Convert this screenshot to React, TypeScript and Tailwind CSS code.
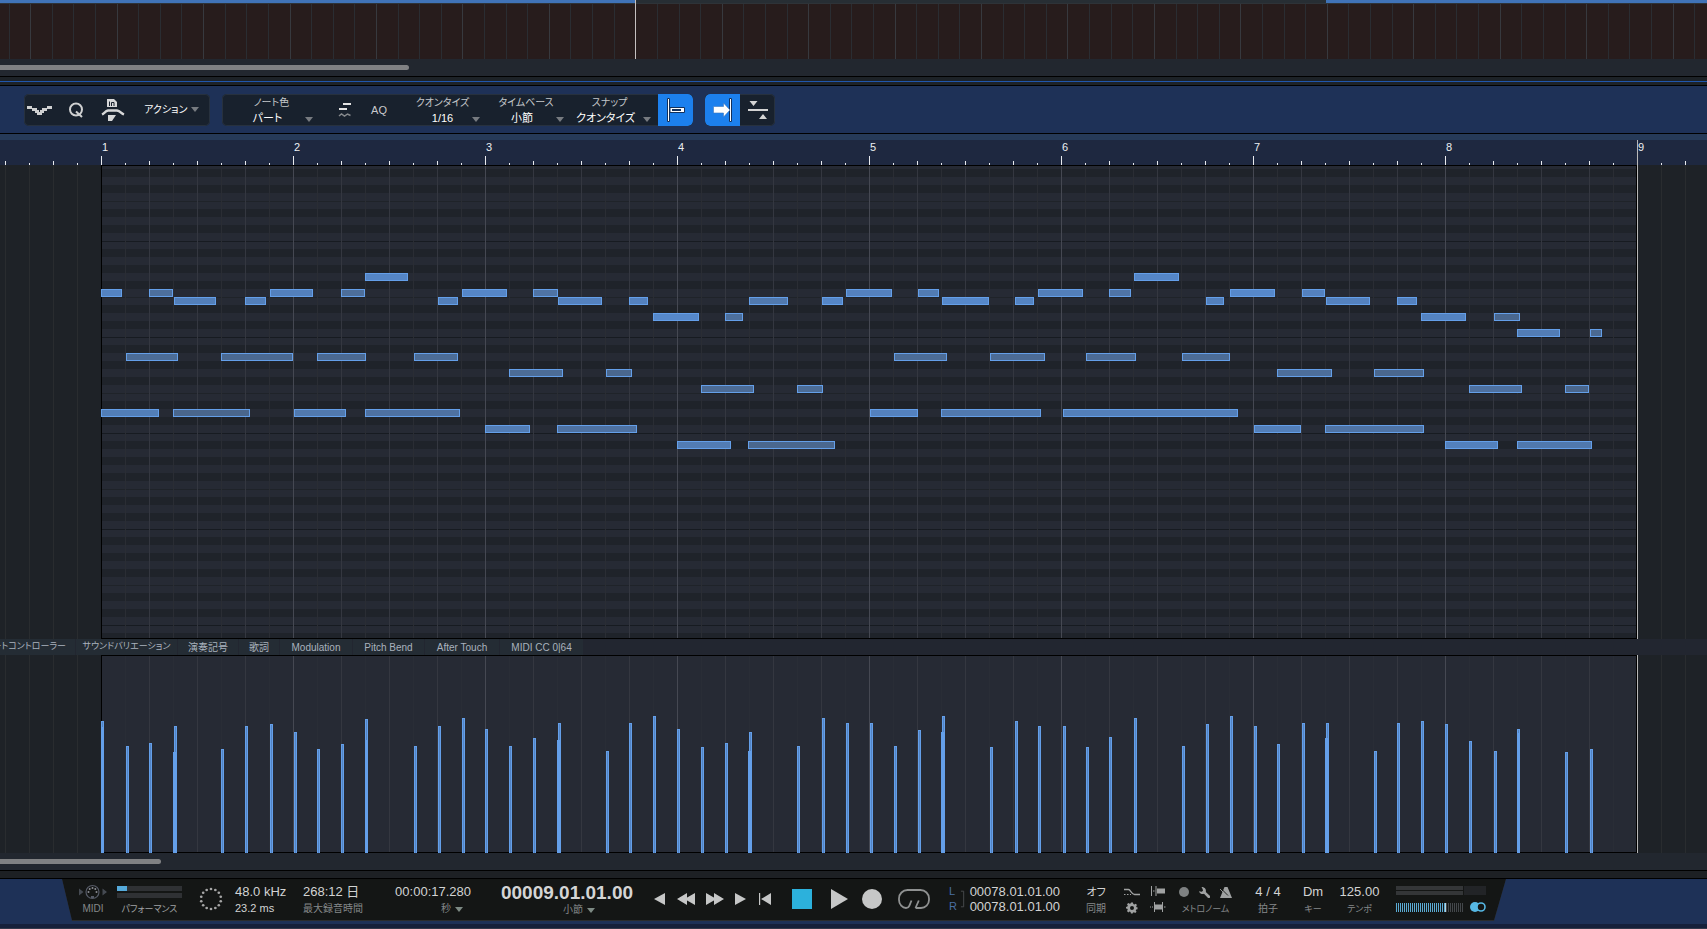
import React from "react";

const BAR = 192;
const STEP = 24;
const LEAD = 101;

const LATIN_JP = "font-['Liberation_Sans','Noto_Sans_CJK_JP',sans-serif]";

/* [start, length, row offset in semitones] */
const NOTES: [number, number, number][] = [
  [264, 43, 13], [1033, 45, 13],
  [0, 21, 15], [48, 24, 15], [169, 43, 15], [240, 24, 15], [361, 45, 15], [432, 25, 15],
  [745, 46, 15], [817, 21, 15], [937, 45, 15], [1008, 22, 15], [1129, 45, 15], [1201, 23, 15],
  [73, 42, 16], [144, 21, 16], [337, 20, 16], [457, 44, 16], [528, 19, 16], [648, 39, 16],
  [721, 21, 16], [841, 47, 16], [914, 19, 16], [1105, 18, 16], [1225, 44, 16], [1296, 20, 16],
  [552, 46, 18], [624, 18, 18], [1320, 45, 18], [1393, 26, 18],
  [1416, 43, 20], [1489, 12, 20],
  [25, 52, 23], [120, 72, 23], [216, 49, 23], [313, 44, 23],
  [793, 53, 23], [889, 55, 23], [985, 50, 23], [1081, 48, 23],
  [408, 54, 25], [505, 26, 25], [1176, 55, 25], [1273, 50, 25],
  [600, 53, 27], [696, 26, 27], [1368, 53, 27], [1464, 24, 27],
  [0, 58, 30], [72, 77, 30], [193, 52, 30], [264, 95, 30], [769, 48, 30], [840, 100, 30], [962, 175, 30],
  [384, 45, 32], [456, 80, 32], [1153, 47, 32], [1224, 99, 32],
  [576, 54, 34], [647, 87, 34], [1344, 53, 34], [1416, 75, 34],
];

/* [start, height in pixels] */
const VELOCITIES: [number, number][] = [
  [0, 132], [0, 126], [25, 107], [48, 110], [73, 127], [72, 101], [120, 104], [144, 127], [169, 129],
  [193, 121], [216, 104], [240, 109], [264, 134], [264, 113], [313, 107], [337, 127], [361, 135], [384, 124],
  [408, 107], [432, 115], [457, 130], [456, 113], [505, 102], [528, 130], [552, 137], [576, 124],
  [600, 106], [624, 110], [648, 121], [647, 102], [696, 107], [721, 135], [745, 130], [769, 130],
  [793, 107], [817, 123], [841, 137], [840, 121], [889, 106], [914, 132], [937, 127], [962, 127],
  [985, 106], [1008, 116], [1033, 135], [1081, 107], [1105, 129], [1129, 137], [1153, 127],
  [1176, 109], [1201, 130], [1225, 130], [1224, 115], [1273, 102], [1296, 130], [1320, 132],
  [1344, 129], [1368, 112], [1393, 102], [1416, 124], [1416, 120], [1464, 101], [1489, 104],
];

const velocityAt = (start: number, row: number) => {
  const hits = VELOCITIES.filter(([x]) => x === start).map(([, h]) => h);
  if (!hits.length) return 115;
  return row < 22 ? Math.max(...hits) : Math.min(...hits);
};

const isStacked = (x: number, h: number) =>
  VELOCITIES.some(([ox, oh]) => Math.abs(ox - x) <= 1 && oh > h);

const noteColor = (v: number) => {
  const t = Math.min(1, Math.max(0, (v - 101) / 36));
  const mix = (a: number, b: number) => Math.round(a + (b - a) * t);
  return `rgb(${mix(74, 86)},${mix(102, 136)},${mix(140, 202)})`;
};

const BLACK_KEYS = [1, 3, 5, 8, 10];
const ROWS = Array.from({ length: 72 }, (_, i) => i);
const LINES = Array.from({ length: 63 }, (_, i) => (i + 1) * STEP);

const lineTone = (x: number) =>
  x % BAR === 0 ? "bg-[#454852]" : x % 48 === 0 ? "bg-[#343740]" : "bg-[#2a2d34]";
const laneTone = (x: number) =>
  x % BAR === 0 ? "bg-[#454852]" : x % 48 === 0 ? "bg-[#343740]" : "bg-[#292d36]";

function SideGrid({ from, count, className }: { from: number; count: number; className: string }) {
  return (
    <div className={`relative overflow-hidden bg-[#1e2227] ${className}`}>
      {Array.from({ length: count }, (_, i) => (
        <span key={i} className="absolute inset-y-0 w-px bg-[#292c2f]" style={{ left: from + i * STEP }} />
      ))}
    </div>
  );
}

function Playhead() {
  return <div className="w-px shrink-0 bg-[#b8b8b8]" />;
}

function Caret({ className = "" }: { className?: string }) {
  return (
    <svg viewBox="0 0 8 5" className={`pointer-events-none h-[5px] w-2 shrink-0 ${className}`} aria-hidden="true">
      <path d="M0 0h8L4 5z" fill="currentColor" />
    </svg>
  );
}

function Field({ id, label, value, className, labelPad, valuePad }: { id: string; label: string; value: string; className: string; labelPad: string; valuePad: string }) {
  return (
    <div className={`relative flex flex-col pt-0.5 ${className}`}>
      <label htmlFor={id} className={`h-4 text-center text-[10px] leading-4 text-[#c4c7ca] ${labelPad}`}>{label}</label>
      <select
        id={id}
        defaultValue={value}
        className={`h-[15px] w-full appearance-none bg-transparent text-center text-[11px] leading-[15px] text-white outline-none [text-align-last:center] ${valuePad}`}
      >
        <option>{value}</option>
      </select>
      <Caret className="absolute right-0 bottom-1 text-[#777b80]" />
    </div>
  );
}

function Overview() {
  return (
    <div className="relative h-[59px] shrink-0 overflow-hidden bg-[#271c1c]">
      {Array.from({ length: 120 }, (_, i) => (
        <span
          key={i}
          className={`absolute inset-y-0 w-px ${i % 4 === 1 ? "bg-[#37393e]" : "bg-[#2a2d32]"}`}
          style={{ left: Math.round(8.6 + i * 21.61) }}
        />
      ))}
      <div className="absolute inset-x-0 top-0 flex h-1 border-b border-[#2e3338] bg-[#272e34]">
        <div className="h-[3px] w-[635px] bg-[#4073b8]" />
        <div className="w-[691px]" />
        <div className="h-[3px] flex-1 bg-[#4073b8]" />
      </div>
      <span className="absolute inset-y-0 left-[635px] w-px bg-[#c4c0c0]" />
    </div>
  );
}

function Toolbar() {
  const panel = "flex h-8 items-center overflow-hidden rounded-[5px] bg-[#18212d] ring-1 ring-inset ring-[#27313e]";
  return (
    <div className="flex h-12 shrink-0 items-center border-b border-black bg-[#1e3157] pl-6">
      <div className={`${panel} w-[186px]`}>
        <button aria-label="ステップ" className="ml-[3px] flex w-[25px] justify-center">
          <svg viewBox="0 0 25 10" className="h-[10px] w-[25px]" fill="#cfd0d1">
            <path d="M0 1h5v3H0zM5 3h5v3H5zM8 5h4v3H8zM10 7h5v3h-5zM13 5h4v3h-4zM15 3h5v3h-5zM20 1h5v3h-5z" />
          </svg>
        </button>
        <button aria-label="クオンタイズを適用" className="ml-4 flex w-4 justify-center">
          <svg viewBox="0 0 16 16" className="h-4 w-4" fill="none" stroke="#cfd0d1" strokeWidth="2">
            <circle cx="8" cy="7.5" r="6" />
            <path d="M8 9.5l6 5.5" />
          </svg>
        </button>
        <button aria-label="ヒューマナイズ" className="ml-[17px] flex w-6 justify-center">
          <svg viewBox="0 0 24 24" className="h-6 w-6">
            <path fill="#d6d7d8" d="M6 1h7l3 3v5H6z" />
            <path fill="none" stroke="#18212d" d="M8.500 3.500V8M10.500 8V4.500h2.500V8" />
            <path fill="none" stroke="#d6d7d8" strokeWidth="2.400" d="M1 16.500c2-1 3.500-3.500 6-4h9c3 .5 4.500 3 7 4" />
            <path fill="#d6d7d8" d="M7 17h8l-4 6H7z" />
          </svg>
        </button>
        <button className="ml-[19px] flex items-center gap-1 text-[10px] text-white">
          アクション
          <Caret className="text-[#777b80]" />
        </button>
      </div>

      <div className={`${panel} ml-3 w-[471px]`}>
        <Field id="note-color" label="ノート色" value="パート" className="ml-5 w-[71px]" labelPad="pr-3" valuePad="pr-5" />
        <button aria-label="ステップ表示" className="ml-6 flex w-4 justify-center">
          <svg viewBox="0 0 14 16" className="h-4 w-[14px]">
            <path fill="#e4e4e4" d="M5 1h8v2H5zM1 6h8v2H1z" />
            <path fill="none" stroke="#85888c" strokeWidth="1.500" d="M1 14l2.500-2 3 2 3-2 3 1.500" />
          </svg>
        </button>
        <button className="ml-3 w-7 pt-px text-center text-[11px] text-[#c8cacc]">AQ</button>
        <Field id="quantize" label="クオンタイズ" value="1/16" className="ml-3 w-[75px]" labelPad="" valuePad="" />
        <Field id="timebase" label="タイムベース" value="小節" className="ml-2 w-[76px]" labelPad="" valuePad="pr-2" />
        <Field id="snap" label="スナップ" value="クオンタイズ" className="ml-2 w-[79px]" labelPad="pr-1" valuePad="pr-3" />
        <button aria-label="スナップ切替" aria-pressed="true" className="ml-auto flex h-8 w-[35px] items-center justify-center rounded-r-[5px] bg-[#1c80ee]">
          <svg viewBox="0 0 20 26" className="h-[26px] w-5">
            <path fill="#fff" stroke="#12305c" d="M1.500 1.500h2v23h-2z" />
            <path fill="#fff" stroke="#12305c" d="M4 10.500h14.500v5H4z" />
            <path fill="#12305c" d="M6 12h9v2H6z" />
          </svg>
        </button>
      </div>

      <div className={`${panel} ml-3 w-[70px]`}>
        <button aria-label="自動スクロール" aria-pressed="true" className="flex h-8 w-[35px] items-center justify-center rounded-l-[5px] bg-[#1c80ee]">
          <svg viewBox="0 0 20 26" className="h-[26px] w-5">
            <path fill="#fff" stroke="#12305c" d="M16.500 1.500h2v23h-2z" />
            <path fill="#fff" stroke="#3a76c0" strokeWidth=".6" d="M.5 9.500h10V6l6.500 7-6.500 7v-4H.5z" />
          </svg>
        </button>
        <button aria-label="ズーム連動" className="flex h-8 w-[35px] items-center justify-center">
          <svg viewBox="0 0 20 20" className="h-5 w-5" fill="#d4d4d4">
            <path d="M1.500 1h8l-4 5zM0 9h20v2H0zM11 19h8l-4-5z" />
          </svg>
        </button>
      </div>
    </div>
  );
}

function Ruler() {
  return (
    <div className="relative h-[31px] shrink-0 overflow-hidden border-t-[6px] border-[#263a58] bg-[#1e2840]">
      {Array.from({ length: 110 }, (_, i) => {
        const x = (i - 4) * STEP;
        const size = x >= 0 && x % BAR === 0 ? "h-[9px]" : x % 48 === 0 ? "h-1" : "h-0.5";
        return <span key={i} className={`absolute bottom-0 w-px bg-[#e8eaee] ${size}`} style={{ left: x + LEAD }} />;
      })}
      {Array.from({ length: 9 }, (_, i) => (
        <span key={i} className="absolute top-0 text-[11px] leading-[14px] text-[#eceff2]" style={{ left: LEAD + i * BAR + 1 }}>
          {i + 1}
        </span>
      ))}
      <span className="absolute -top-[6px] bottom-0 left-[1637px] w-px bg-[#b8b8b8]" />
    </div>
  );
}

function PianoRoll() {
  return (
    <div className="flex min-h-0 flex-1">
      <SideGrid from={5} count={4} className="w-[101px] shrink-0" />
      <div className="relative w-[1536px] shrink-0">
        <div className="absolute inset-0 overflow-hidden border border-black bg-[#262a34]">
          <div className="absolute inset-x-0 -top-[21px]">
            {ROWS.map((r) => {
              const k = r % 12;
              const tone = BLACK_KEYS.includes(k)
                ? "bg-[#1f232a]"
                : k === 0
                  ? "border-t border-[#171b21]"
                  : k === 7
                    ? "border-t border-[#1f2329]"
                    : "";
              return <div key={r} className={`h-2 ${tone}`} />;
            })}
          </div>
          {LINES.map((x) => (
            <span key={x} className={`absolute inset-y-0 w-px ${lineTone(x)}`} style={{ left: x - 1 }} />
          ))}
        </div>
        {NOTES.map(([x, w, row]) => (
          <span
            key={`${x}-${row}`}
            className="absolute h-2 border border-[#649fe9]"
            style={{ left: x, width: w, top: row * 8 + 4, backgroundColor: noteColor(velocityAt(x, row)) }}
          />
        ))}
      </div>
      <Playhead />
      <SideGrid from={23} count={20} className="flex-1" />
    </div>
  );
}

const TABS: [string, string][] = [
  ["ノートコントローラー", "w-[75px] justify-end pr-[9px] text-[9px]"],
  ["サウンドバリエーション", "w-[101px] justify-center text-[9px]"],
  ["演奏記号", "w-[60px] justify-center text-[10px]"],
  ["歌詞", "w-10 justify-center text-[10px]"],
  ["Modulation", "w-[72px] justify-center text-[10px]"],
  ["Pitch Bend", "w-[71px] justify-center text-[10px]"],
  ["After Touch", "w-[74px] justify-center text-[10px]"],
  ["MIDI CC 0|64", "w-[83px] justify-center text-[10px]"],
];

function ControllerTabs() {
  return (
    <div className="flex h-4 shrink-0 gap-px overflow-hidden bg-[#222630]">
      {TABS.map(([label, cls]) => (
        <button key={label} className={`flex h-4 shrink-0 items-center overflow-hidden whitespace-nowrap bg-[#242c34] text-[#a9b2bd] ${cls}`}>
          {label}
        </button>
      ))}
    </div>
  );
}

function VelocityLane() {
  return (
    <div className="flex h-[198px] shrink-0">
      <SideGrid from={5} count={4} className="w-[101px] shrink-0" />
      <div className="relative w-[1536px] shrink-0">
        <div className="absolute inset-0 overflow-hidden border border-black bg-[#262a34]">
          {LINES.map((x) => (
            <span key={x} className={`absolute inset-y-0 w-px ${laneTone(x)}`} style={{ left: x - 1 }} />
          ))}
        </div>
        {VELOCITIES.map(([x, h]) => (
          <span
            key={`${x}-${h}`}
            className={`absolute bottom-0 w-[3px] border-x border-t border-[#649fe9] ${isStacked(x, h) ? "bg-[#649fe9]" : "bg-[#5384c4]"}`}
            style={{ left: x, height: h }}
          />
        ))}
      </div>
      <Playhead />
      <SideGrid from={23} count={20} className="flex-1" />
    </div>
  );
}

function Cell({ className, children }: { className: string; children: React.ReactNode }) {
  return <div className={`flex shrink-0 flex-col gap-px whitespace-nowrap ${className}`}>{children}</div>;
}

const TOP = "flex h-4 items-center text-[13px] leading-4 text-[#d2d3d3]";
const SUB = "flex h-4 items-center leading-4 text-[#85888a]";

function UnitSelect({ label, value }: { label: string; value: string }) {
  return (
    <span className={`${SUB} gap-1 text-[10px]`}>
      <select aria-label={label} defaultValue={value} className="appearance-none bg-transparent outline-none">
        <option>{value}</option>
      </select>
      <Caret className="text-[#7d8a84]" />
    </span>
  );
}

function NavButton({ label, width, size, view, children }: { label: string; width: string; size: string; view: string; children: React.ReactNode }) {
  return (
    <button aria-label={label} className={`flex h-[29px] shrink-0 items-center justify-center ${width}`}>
      <svg viewBox={view} className={size} fill="#c6c7c7">{children}</svg>
    </button>
  );
}

function Transport() {
  return (
    <div className="flex h-[45px] shrink-0 bg-[#1e3157]">
      <div className="mr-[201px] ml-[62px] h-[42px] flex-1 bg-[#2a2c2d] [clip-path:polygon(0_0,100%_0,calc(100%-12px)_100%,10px_100%)]">
        <div className="flex h-[41px] overflow-hidden bg-[#141615] pt-[5px] pl-2 [clip-path:polygon(0_0,100%_0,calc(100%-12px)_100%,10px_100%)]">
          <Cell className="w-[46px] items-center">
            <span className={TOP}>
              <svg viewBox="0 0 28 16" className="h-4 w-7">
                <path d="M0 4.500l4.500 3.500L0 11.500zM23.500 4.500L28 8l-4.500 3.500z" fill="#454a52" />
                <circle cx="13.500" cy="8" r="6.500" fill="none" stroke="#555a66" strokeWidth="1.200" />
                <g fill="#8a8d92">
                  <circle cx="9.500" cy="8" r="1" /><circle cx="10.700" cy="5" r="1" /><circle cx="13.500" cy="4" r="1" />
                  <circle cx="16.300" cy="5" r="1" /><circle cx="17.500" cy="8" r="1" />
                </g>
                <path d="M12 14h3v-2h-3z" fill="#555a66" />
              </svg>
            </span>
            <span className={`${SUB} text-[10px]`}>MIDI</span>
          </Cell>
          <Cell className="w-[67px] items-center">
            <span className="flex h-4 flex-col justify-center gap-0.5">
              <span className="flex h-[5px] w-[65px] bg-[#2f3134]"><span className="w-[10px] bg-[#55aadb]" /></span>
              <span className="h-[5px] w-[65px] bg-[#2f3134]" />
            </span>
            <span className={`${SUB} text-[9px] text-[#a0a2a4]`}>パフォーマンス</span>
          </Cell>
          <div className="flex h-[29px] w-[52px] shrink-0 items-center justify-center pl-1">
            <svg viewBox="0 0 24 24" className="h-6 w-6" fill="#a6a6a6">
              {Array.from({ length: 14 }, (_, i) => {
                const a = (i * Math.PI * 2) / 14 - Math.PI / 2;
                return <circle key={i} cx={12 + Math.cos(a) * 10} cy={12 + Math.sin(a) * 10} r="1.350" />;
              })}
            </svg>
          </div>
          <Cell className="w-[68px]">
            <span className={TOP}>48.0 kHz</span>
            <span className="flex h-[15px] items-center text-[11px] leading-[15px] text-[#d2d3d3]">23.2 ms</span>
          </Cell>
          <Cell className="w-[92px]">
            <span className={TOP}>268:12 日</span>
            <span className={`${SUB} text-[10px]`}>最大録音時間</span>
          </Cell>
          <Cell className="w-[76px] items-end">
            <span className={TOP}>00:00:17.280</span>
            <span className="pr-2"><UnitSelect label="時間単位" value="秒" /></span>
          </Cell>
          <Cell className="ml-[29px] w-[134px] items-center">
            <span className="flex h-[18px] items-center text-[19px] leading-[18px] font-bold text-[#d4d5d5]">00009.01.01.00</span>
            <span className="-mt-px pl-6"><UnitSelect label="位置単位" value="小節" /></span>
          </Cell>

          <div className="ml-[13px] flex shrink-0">
            <NavButton label="一歩戻る" width="w-[25px]" size="h-3 w-[11px]" view="0 0 11 12"><path d="M11 0v12L0 6z" /></NavButton>
            <NavButton label="巻き戻し" width="w-7" size="h-3 w-[18px]" view="0 0 18 12"><path d="M10 0v12L0 6zM18 0v12L7.500 6z" /></NavButton>
            <NavButton label="早送り" width="w-[30px]" size="h-3 w-[18px]" view="0 0 18 12"><path d="M0 0v12l10.500-6zM8 0v12l10-6z" /></NavButton>
            <NavButton label="一歩進む" width="w-5" size="h-3 w-[11px]" view="0 0 11 12"><path d="M0 0v12l11-6z" /></NavButton>
            <NavButton label="先頭へ" width="w-[30px]" size="h-3 w-3" view="0 0 12 12"><path d="M0 0h1.200v12H0zM12 0v12L2 6z" /></NavButton>
            <NavButton label="停止" width="w-[43px]" size="h-5 w-5" view="0 0 20 20"><path d="M0 0h20v20H0z" fill="#2cb1dc" /></NavButton>
            <NavButton label="再生" width="w-[33px]" size="h-5 w-[17px]" view="0 0 17 20"><path d="M0 0v20l17-10z" /></NavButton>
            <NavButton label="録音" width="w-8" size="h-5 w-5" view="0 0 20 20"><circle cx="10" cy="10" r="10" /></NavButton>
            <NavButton label="ループ" width="w-[52px]" size="h-5 w-8" view="0 0 32 20">
              <path
                d="M17.500 19h5.500a8 8 0 0 0 8-8v-1.500a8.500 8.500 0 0 0-8.500-8.500h-13A8.500 8.500 0 0 0 1 9.500V11c0 4.500 3.500 8 7 8 2 0 2.800-1 3.300-2.200L13.500 11.500M17.500 19l3.300-7.500"
                fill="none" stroke="#8f9191" strokeWidth="1.800"
              />
            </NavButton>
          </div>

          <div className="ml-[9px] flex h-[30px] w-[111px] shrink-0 items-center">
            <div className="flex w-3 flex-col text-[11px] leading-[15px] text-[#4a70a3]"><span>L</span><span>R</span></div>
            <svg viewBox="0 0 5 18" className="mr-[5px] h-[18px] w-[5px]" fill="none" stroke="#4a4d50"><path d="M1 .5h3v17H1" /></svg>
            <div className="flex flex-col text-[13px] leading-[15px] text-[#d2d3d3]"><span>00078.01.01.00</span><span>00078.01.01.00</span></div>
          </div>
          <Cell className="ml-4 w-10 items-center">
            <span className="flex h-4 items-center text-[11px] leading-4 text-[#d2d3d3]">オフ</span>
            <span className={`${SUB} text-[10px]`}>同期</span>
          </Cell>
          <Cell className="w-8 items-center">
            <span className={TOP}>
              <svg viewBox="0 0 16 8" className="h-2 w-4" fill="none" stroke="#a0a2a2">
                <path d="M0 1.500h4.500c2 0 3 5 6 5H16" strokeWidth="1.300" />
                <path d="M0 6.500h7" strokeDasharray="1.500 1.500" />
              </svg>
            </span>
            <span className="flex h-[14px] items-center">
              <svg viewBox="0 0 24 24" className="h-3 w-3" fill="#a0a2a2">
                <path fillRule="evenodd" d="M10 1h4l.6 3.200 2.200.9L19.500 3.300 22 6l-1.700 2.700.8 2H23v3.600l-2.600.6-.9 2 1.600 2.800-2.600 2.500-2.700-1.600-2.100.8L13.500 23h-3.600l-.8-3-2-.8-2.700 1.600L2 18.200l1.500-2.700-.9-2.100L0 12.800V9.800l2.800-.6.8-2L2 4.500 4.600 2l2.700 1.700 2-.8zM12 8a4 4 0 1 0 0 8 4 4 0 0 0 0-8z" />
              </svg>
            </span>
          </Cell>
          <Cell className="w-5 items-center">
            <span className="flex h-[14px] items-center">
              <svg viewBox="0 0 16 10" className="h-[10px] w-4" fill="#a0a2a2">
                <path d="M1 0h1v10H1zM3 4.500h1.500v1H3zM5.500 0h1v10h-1zM7 2.500h8v5H7z" />
              </svg>
            </span>
            <span className={SUB}>
              <svg viewBox="0 0 16 10" className="h-[10px] w-4" fill="#a0a2a2">
                <path d="M0 4.500h1v1H0zM2 4.500h1v1H2zM4 0h1v10H4zM5 2.500h7v5H5zM12 0h1v10h-1zM14 4.500h1.500v1H14z" />
              </svg>
            </span>
          </Cell>
          <Cell className="w-[75px] items-center">
            <span className={`${TOP} gap-[10px]`}>
              <svg viewBox="0 0 10 10" className="h-[10px] w-[10px]" fill="#7e8182"><circle cx="5" cy="5" r="5" /></svg>
              <svg viewBox="0 0 11 11" className="h-[11px] w-[11px]">
                <path fill="#a0a2a2" d="M2.500 0a4 4 0 0 1 4.300 5l4 3.700a1.400 1.400 0 0 1-2 2L5 6.800A3.800 3.800 0 0 1 0 4.300l2.700.4 1.300-1L3.600 2z" />
              </svg>
              <svg viewBox="0 0 12 11" className="h-[11px] w-3">
                <path d="M4.500 0h3L12 11H0z" fill="#a0a2a2" />
                <path d="M.5 1l7.500 7.500" stroke="#141615" strokeWidth=".9" />
                <path d="M0 2l4 4" stroke="#a0a2a2" strokeWidth=".9" />
              </svg>
            </span>
            <span className={`${SUB} text-[9px]`}>メトロノーム</span>
          </Cell>
          <Cell className="w-[50px] items-center">
            <span className={TOP}>4 / 4</span>
            <span className={`${SUB} text-[10px]`}>拍子</span>
          </Cell>
          <Cell className="w-10 items-center">
            <span className={TOP}>Dm</span>
            <span className={`${SUB} text-[9px]`}>キー</span>
          </Cell>
          <Cell className="w-[53px] items-center">
            <span className={TOP}>125.00</span>
            <span className={`${SUB} text-[9px]`}>テンポ</span>
          </Cell>
          <div className="ml-[10px] flex w-[90px] shrink-0 flex-col gap-[7px] pt-0.5">
            <div className="flex h-[9px] gap-px">
              <span className="flex w-[67px] flex-col gap-px"><span className="h-1 bg-[#343638]" /><span className="h-1 bg-[#343638]" /></span>
              <span className="w-[22px] bg-[#222427]" />
            </div>
            <div className="flex h-[10px] items-center gap-[7px]">
              <svg viewBox="0 0 67 9" className="h-[9px] w-[67px]" shapeRendering="crispEdges">
                {Array.from({ length: 34 }, (_, i) => (
                  <rect key={i} x={i * 2} y="0" width="1" height="9" fill={i < 25 ? "#5aa9d2" : "#43474b"} />
                ))}
                <rect x="49" y="0" width="1" height="9" fill="#b6d3e0" />
              </svg>
              <svg viewBox="0 0 16 10" className="h-[10px] w-4">
                <circle cx="5" cy="5" r="5" fill="#56b8e4" />
                <circle cx="11" cy="5" r="4" fill="#141615" stroke="#56b8e4" strokeWidth="1.600" />
              </svg>
            </div>
          </div>
        </div>
      </div>
    </div>
  );
}

export default function App() {
  return (
    <div className={`flex min-h-screen flex-col overflow-hidden bg-[#22272f] [font-feature-settings:'palt'] ${LATIN_JP}`}>
      <Overview />
      <div className="h-[17px] shrink-0 bg-[#22272f] pt-1.5">
        <div className="h-[5px] w-[409px] rounded-r-full bg-[#808183]" />
      </div>
      <div className="flex h-[10px] shrink-0 flex-col justify-center border-y border-black bg-[#1d2227]">
        <div className="h-px bg-[#2056ad]" />
      </div>
      <Toolbar />
      <Ruler />
      <PianoRoll />
      <ControllerTabs />
      <VelocityLane />
      <div className="h-[17px] shrink-0 bg-[#22272f] pt-1.5">
        <div className="h-[5px] w-[161px] rounded-r-full bg-[#808183]" />
      </div>
      <div className="h-[9px] shrink-0 border-y border-black bg-[#1d2024]" />
      <Transport />
      <div className="h-[5px] shrink-0 border-b border-[#34394a] bg-[#16203a]" />
    </div>
  );
}
